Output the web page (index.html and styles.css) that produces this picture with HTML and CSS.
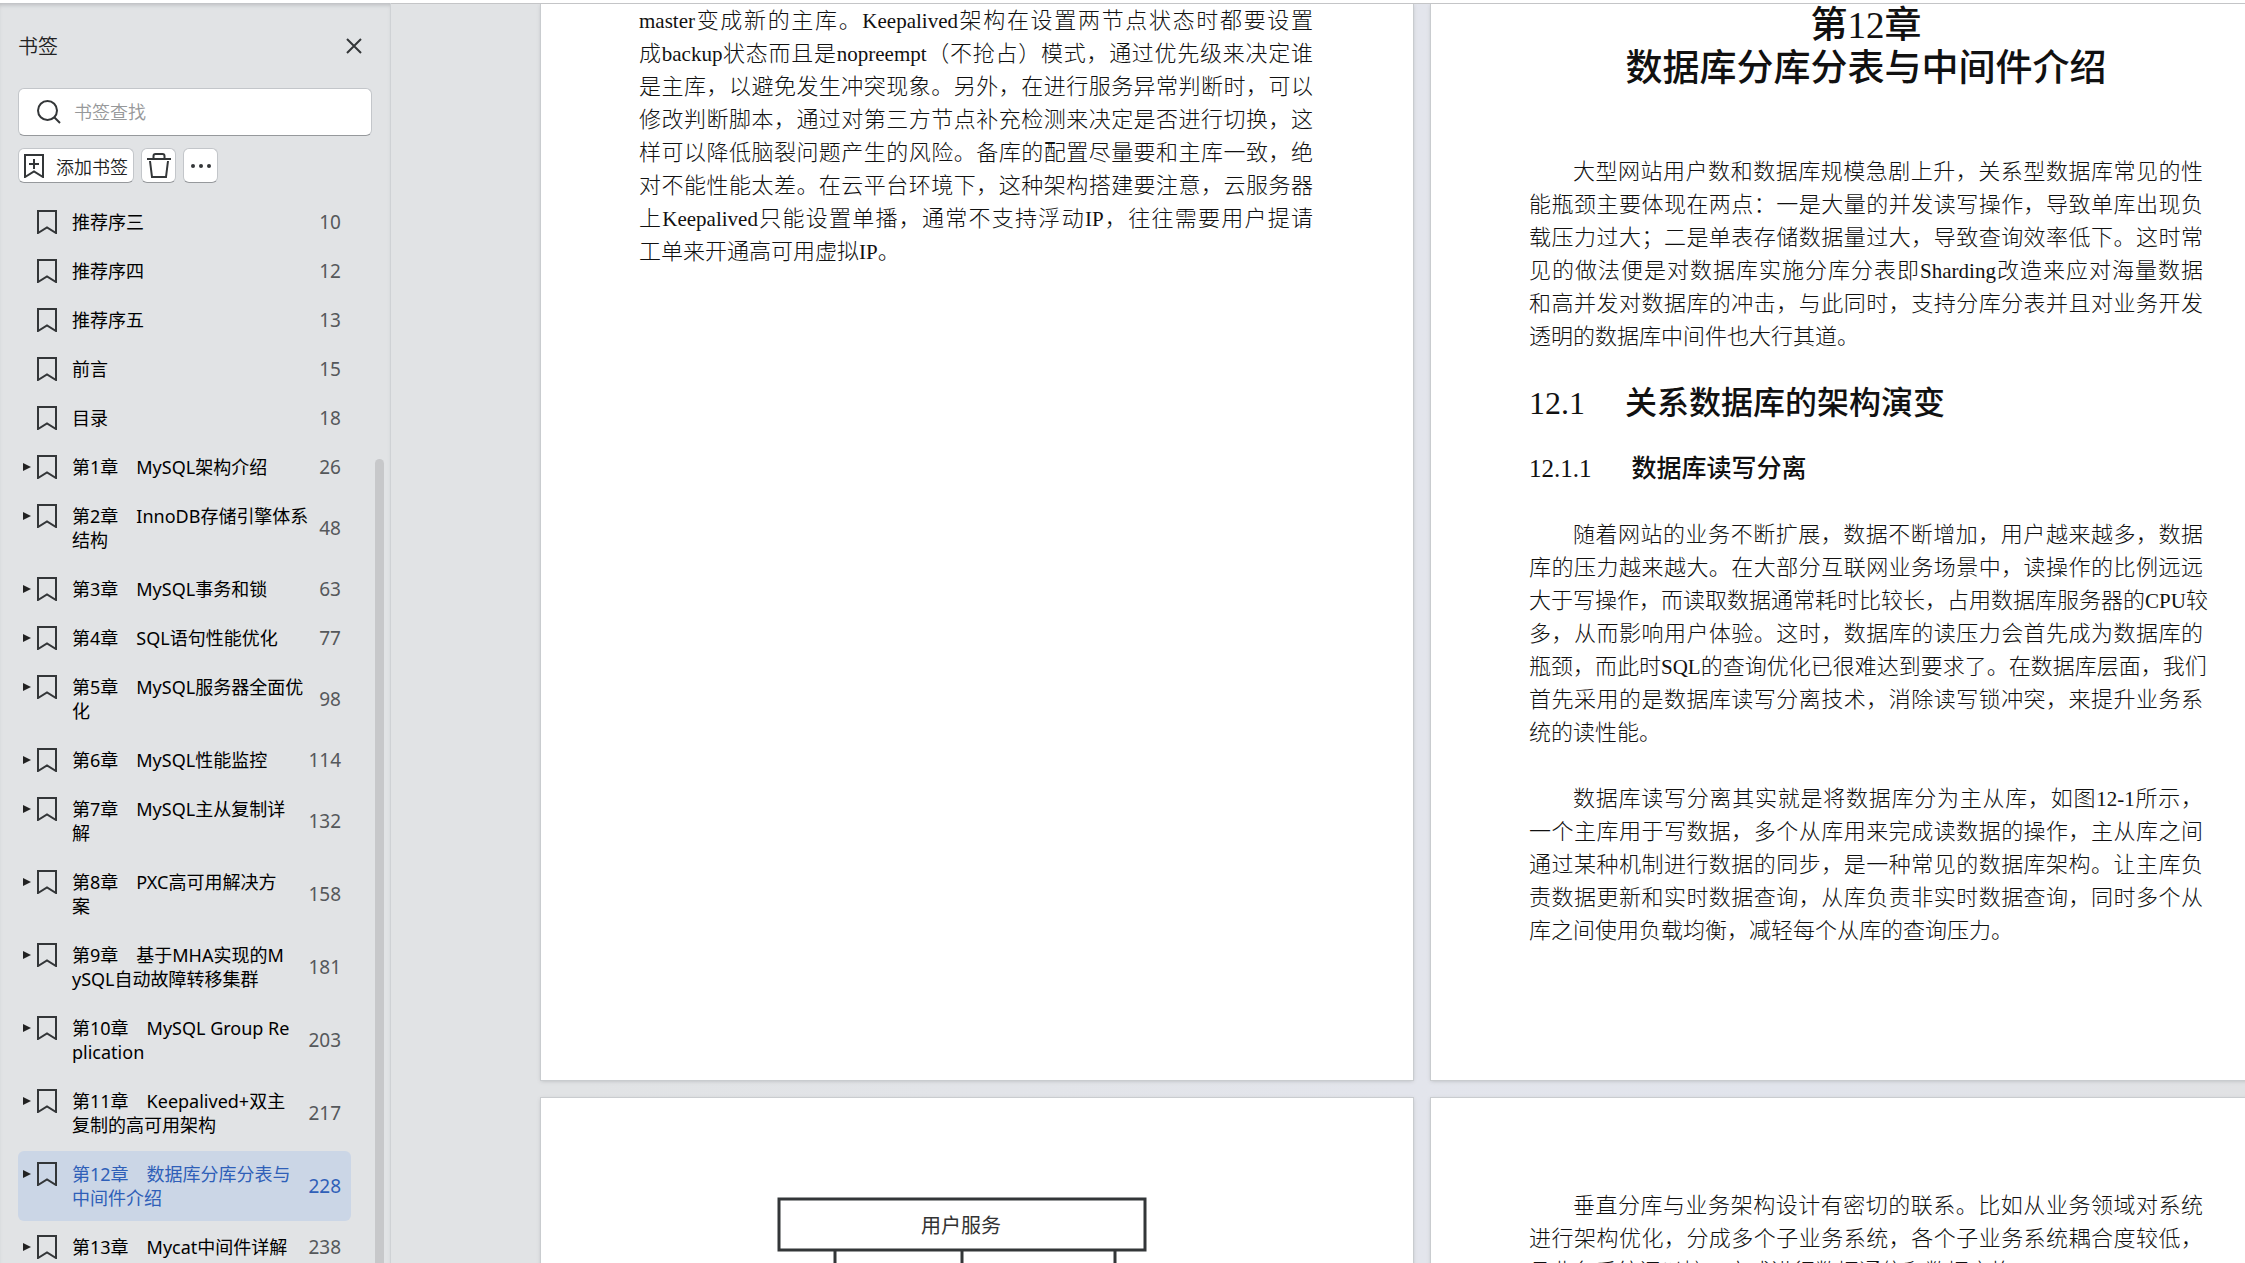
FILE: index.html
```html
<!DOCTYPE html>
<html lang="zh-CN">
<head>
  <meta charset="UTF-8" />
  <meta name="viewport" content="width=device-width, initial-scale=1.0"/>
  <title>第12章 数据库分库分表与中间件介绍</title>
  <link rel="stylesheet" href="styles.css">
</head>
<body>

  <svg class="defs" aria-hidden="true">
    <symbol id="i-mark" viewBox="0 0 20 24"><path d="M1 1H19V23L10 17.5L1 23Z"/></symbol>
    <symbol id="i-mark-add" viewBox="0 0 20 24"><path d="M1 1H19V23L10 17.5L1 23ZM10 5V15M5 10H15"/></symbol>
  </svg>

  <aside class="sidebar">
    <header class="side-head">
      <h2>书签</h2>
      <button type="button" class="close" aria-label="关闭">
        <svg viewBox="0 0 16 16"><path d="M1 1L15 15M15 1L1 15"/></svg>
      </button>
    </header>

    <label class="search">
      <svg viewBox="0 0 24 24"><circle cx="10.5" cy="10.5" r="9.5"/><path d="M17 17L23 23"/></svg>
      <input type="search" placeholder="书签查找" aria-label="书签查找">
    </label>

    <div class="tools">
      <button type="button" class="tool add">
        <svg class="mark"><use href="#i-mark-add"/></svg>
        添加书签
      </button>
      <button type="button" class="tool" aria-label="删除">
        <svg class="trash" viewBox="0 0 24 25"><path d="M0 6H24M6.500 6V3Q6.500 1 8.500 1H15.500Q17.500 1 17.500 3V6M3 8L5 24H19L21 8"/></svg>
      </button>
      <button type="button" class="tool" aria-label="更多">
        <svg class="dots" viewBox="0 0 20 4"><circle cx="2" cy="2" r="2"/><circle cx="10" cy="2" r="2"/><circle cx="18" cy="2" r="2"/></svg>
      </button>
    </div>

    <div class="list-wrap">
      <nav class="list">
        <a href="#"><svg class="mark"><use href="#i-mark"/></svg><span class="name">推荐序三</span><span class="num">10</span></a>
        <a href="#"><svg class="mark"><use href="#i-mark"/></svg><span class="name">推荐序四</span><span class="num">12</span></a>
        <a href="#"><svg class="mark"><use href="#i-mark"/></svg><span class="name">推荐序五</span><span class="num">13</span></a>
        <a href="#"><svg class="mark"><use href="#i-mark"/></svg><span class="name">前言</span><span class="num">15</span></a>
        <a href="#"><svg class="mark"><use href="#i-mark"/></svg><span class="name">目录</span><span class="num">18</span></a>
        <a href="#" class="parent"><svg class="mark"><use href="#i-mark"/></svg><span class="name">第1章　MySQL架构介绍</span><span class="num">26</span></a>
        <a href="#" class="parent"><svg class="mark"><use href="#i-mark"/></svg><span class="name">第2章　InnoDB存储引擎体系<br>结构</span><span class="num">48</span></a>
        <a href="#" class="parent"><svg class="mark"><use href="#i-mark"/></svg><span class="name">第3章　MySQL事务和锁</span><span class="num">63</span></a>
        <a href="#" class="parent"><svg class="mark"><use href="#i-mark"/></svg><span class="name">第4章　SQL语句性能优化</span><span class="num">77</span></a>
        <a href="#" class="parent"><svg class="mark"><use href="#i-mark"/></svg><span class="name">第5章　MySQL服务器全面优<br>化</span><span class="num">98</span></a>
        <a href="#" class="parent"><svg class="mark"><use href="#i-mark"/></svg><span class="name">第6章　MySQL性能监控</span><span class="num">114</span></a>
        <a href="#" class="parent"><svg class="mark"><use href="#i-mark"/></svg><span class="name">第7章　MySQL主从复制详<br>解</span><span class="num">132</span></a>
        <a href="#" class="parent"><svg class="mark"><use href="#i-mark"/></svg><span class="name">第8章　PXC高可用解决方<br>案</span><span class="num">158</span></a>
        <a href="#" class="parent"><svg class="mark"><use href="#i-mark"/></svg><span class="name">第9章　基于MHA实现的M<br>ySQL自动故障转移集群</span><span class="num">181</span></a>
        <a href="#" class="parent"><svg class="mark"><use href="#i-mark"/></svg><span class="name">第10章　MySQL Group Re<br>plication</span><span class="num">203</span></a>
        <a href="#" class="parent"><svg class="mark"><use href="#i-mark"/></svg><span class="name">第11章　Keepalived+双主<br>复制的高可用架构</span><span class="num">217</span></a>
        <a href="#" class="parent active"><svg class="mark"><use href="#i-mark"/></svg><span class="name">第12章　数据库分库分表与<br>中间件介绍</span><span class="num">228</span></a>
        <a href="#" class="parent"><svg class="mark"><use href="#i-mark"/></svg><span class="name">第13章　Mycat中间件详解</span><span class="num">238</span></a>
      </nav>
      <div class="thumb"></div>
    </div>
  </aside>

  <main class="viewer">
    <section class="sheet">
      <p>
        <span class="line"><span class="en">master</span>变成新的主库。<span class="en">Keepalived</span>架构在设置两节点状态时都要设置</span>
        <span class="line">成<span class="en">backup</span>状态而且是<span class="en">nopreempt</span>（不抢占）模式，通过优先级来决定谁</span>
        <span class="line">是主库，以避免发生冲突现象。另外，在进行服务异常判断时，可以</span>
        <span class="line">修改判断脚本，通过对第三方节点补充检测来决定是否进行切换，这</span>
        <span class="line">样可以降低脑裂问题产生的风险。备库的配置尽量要和主库一致，绝</span>
        <span class="line">对不能性能太差。在云平台环境下，这种架构搭建要注意，云服务器</span>
        <span class="line">上<span class="en">Keepalived</span>只能设置单播，通常不支持浮动<span class="en">IP</span>，往往需要用户提请</span>
        <span class="line end">工单来开通高可用虚拟<span class="en">IP</span>。</span>
      </p>
    </section>

    <section class="sheet">
      <h1>第12章<br>数据库分库分表与中间件介绍</h1>
      <p>
        <span class="line first">大型网站用户数和数据库规模急剧上升，关系型数据库常见的性</span>
        <span class="line">能瓶颈主要体现在两点：一是大量的并发读写操作，导致单库出现负</span>
        <span class="line">载压力过大；二是单表存储数据量过大，导致查询效率低下。这时常</span>
        <span class="line">见的做法便是对数据库实施分库分表即<span class="en">Sharding</span>改造来应对海量数据</span>
        <span class="line">和高并发对数据库的冲击，与此同时，支持分库分表并且对业务开发</span>
        <span class="line end">透明的数据库中间件也大行其道。</span>
      </p>
      <h2><span>12.1</span><span>关系数据库的架构演变</span></h2>
      <h3><span>12.1.1</span><span>数据库读写分离</span></h3>
      <p>
        <span class="line first">随着网站的业务不断扩展，数据不断增加，用户越来越多，数据</span>
        <span class="line">库的压力越来越大。在大部分互联网业务场景中，读操作的比例远远</span>
        <span class="line">大于写操作，而读取数据通常耗时比较长，占用数据库服务器的<span class="en">CPU</span>较</span>
        <span class="line">多，从而影响用户体验。这时，数据库的读压力会首先成为数据库的</span>
        <span class="line">瓶颈，而此时<span class="en">SQL</span>的查询优化已很难达到要求了。在数据库层面，我们</span>
        <span class="line">首先采用的是数据库读写分离技术，消除读写锁冲突，来提升业务系</span>
        <span class="line end">统的读性能。</span>
      </p>
      <p>
        <span class="line first">数据库读写分离其实就是将数据库分为主从库，如图<span class="en">12-1</span>所示，</span>
        <span class="line">一个主库用于写数据，多个从库用来完成读数据的操作，主从库之间</span>
        <span class="line">通过某种机制进行数据的同步，是一种常见的数据库架构。让主库负</span>
        <span class="line">责数据更新和实时数据查询，从库负责非实时数据查询，同时多个从</span>
        <span class="line end">库之间使用负载均衡，减轻每个从库的查询压力。</span>
      </p>
    </section>

    <section class="sheet next">
      <svg class="figure" viewBox="0 0 370 120">
        <path d="M2 2H368V53H2ZM58 53V120M185 53V120M338 53V120"/>
        <text x="184" y="36">用户服务</text>
      </svg>
    </section>

    <section class="sheet next">
      <p>
        <span class="line first">垂直分库与业务架构设计有密切的联系。比如从业务领域对系统</span>
        <span class="line">进行架构优化，分成多个子业务系统，各个子业务系统耦合度较低，</span>
        <span class="line end">且业务系统间以接口方式进行数据通信和数据交换。</span>
      </p>
    </section>
  </main>

</body>
</html>
```
FILE: styles.css
```css
:root {
  --side-bg: #e1e3e5;
  --icon: #333638;
  --muted: #55585b;
  --active: #2f5fb8;
  --active-bg: #cbd6e6;
  --edge: #c3c6ca;
}
* { box-sizing: border-box; margin: 0; padding: 0; }
body {
  display: flex;
  height: 100vh;
  overflow: hidden;
  border-top: 3px solid #fff;
  background: var(--side-bg);
  font-family: "Noto Sans", "Noto Sans CJK SC", sans-serif;
  color: #000;
}
.defs { display: none; }
svg { fill: none; stroke: var(--icon); stroke-width: 2; flex: none; }
button { font: inherit; color: inherit; border: none; cursor: pointer; }

/* sidebar */
.sidebar {
  width: 391px;
  flex: none;
  padding-left: 18px;
  border-right: 1px solid #cfd2d5;
  box-shadow: inset 0 4px 4px -2px #b9bbbe;
}
.side-head {
  display: flex; align-items: center; justify-content: space-between;
  height: 85px;
  padding-right: 28px;
}
.side-head h2 { font-size: 20px; font-weight: 350; color: #222; }
.close { display: flex; background: none; }
.close svg { width: 16px; height: 16px; }
.search {
  display: flex; align-items: center; gap: 13px;
  height: 48px;
  margin-right: 18px; padding: 0 18px;
  background: #fff;
  border: 1px solid var(--edge); border-bottom-color: #96999c;
  border-radius: 6px;
}
.search svg { width: 24px; height: 24px; }
.search input {
  flex: 1; min-width: 0;
  border: none; outline: none; background: none;
  font: inherit; font-size: 18px; font-weight: 350;
}
.search input::placeholder { color: #96989a; }
.tools { display: flex; gap: 7px; margin: 12px 0 16px; }
.tool {
  display: flex; align-items: center; justify-content: center;
  width: 35px; height: 35px;
  background: #fff;
  border: 1px solid var(--edge); border-bottom-color: #96999c;
  border-radius: 6px;
  font-size: 18px; font-weight: 350; color: #222;
}
.tool.add { width: 116px; gap: 12px; }
.mark { width: 20px; height: 24px; }
.trash { width: 24px; height: 25px; }
.dots { width: 20px; height: 4px; fill: var(--icon); stroke: none; }

.list-wrap { display: flex; gap: 24px; }
.list { width: 333px; }
.list a {
  display: flex; align-items: flex-start;
  position: relative;
  margin-bottom: 3px; padding: 11px 10px 11px 19px;
  border-radius: 6px;
  font-size: 18px; line-height: 24px;
  color: #000; text-decoration: none; white-space: nowrap;
}
.list .name { flex: 1; margin-left: 15px; }
.list .num { align-self: center; font-size: 19px; color: var(--muted); }
.list .parent::before {
  content: "";
  position: absolute; left: 5px; top: 19px;
  border: solid transparent; border-width: 4px 0 4px 8px;
  border-left-color: #222;
}
.list .active { background: var(--active-bg); }
.list .active, .list .active .num { color: var(--active); }
.thumb { width: 9px; margin-top: 260px; border-radius: 5px 5px 0 0; background: #c7c8ca; }

/* document pages */
.viewer {
  flex: 1; min-width: 0;
  display: grid; grid-template-columns: 872px 872px; gap: 18px;
  align-content: start;
  padding: 0 0 0 150px;
  overflow: hidden;
  border-top: 1px solid #c4c5c7;
  background: linear-gradient(90deg, #e1e3e5 10%, #e3e5ec 55%, #e1e4ec 75%, #e1e2e4);
}
.sheet {
  padding: 0 100px 133px 98px;
  background: #fff;
  box-shadow: 0 0 0 1px #c9cccf, 0 1px 4px #b5b8bb;
  font-family: "Liberation Serif", "Noto Sans CJK SC", serif;
  font-weight: 300;
  color: #111;
}
.sheet.next { padding-top: 91px; }
.sheet p { font-size: 22px; line-height: 33px; }
.sheet p + p { margin-top: 33px; }
.line { display: block; text-align-last: justify; white-space: nowrap; }
.line.first { padding-left: 44px; }
.line.end { text-align-last: left; }
.en { font-size: 21px; line-height: 1; }
.sheet h1 { margin-bottom: 65px; font-size: 37px; line-height: 43px; font-weight: 500; text-align: center; }
.sheet h2, .sheet h3 { display: flex; gap: 40px; font-weight: 500; }
.sheet h2 { margin: 28px 0 27px; font-size: 32px; line-height: 44px; }
.sheet h3 { margin-bottom: 32px; font-size: 25px; line-height: 34px; }
.figure { display: block; width: 370px; height: 120px; margin: 8px 0 0 138px; stroke-width: 3; }
.figure text {
  font: 20px "Noto Sans CJK SC", sans-serif;
  text-anchor: middle; fill: #333; stroke: none;
}
```
